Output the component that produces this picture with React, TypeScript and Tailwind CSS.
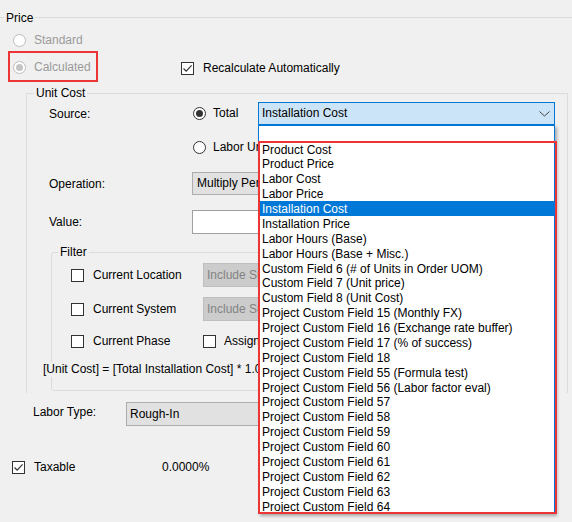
import React from 'react';

const sourceItems = [
  'Product Cost',
  'Product Price',
  'Labor Cost',
  'Labor Price',
  'Installation Cost',
  'Installation Price',
  'Labor Hours (Base)',
  'Labor Hours (Base + Misc.)',
  'Custom Field 6 (# of Units in Order UOM)',
  'Custom Field 7 (Unit price)',
  'Custom Field 8 (Unit Cost)',
  'Project Custom Field 15 (Monthly FX)',
  'Project Custom Field 16 (Exchange rate buffer)',
  'Project Custom Field 17 (% of success)',
  'Project Custom Field 18',
  'Project Custom Field 55 (Formula test)',
  'Project Custom Field 56 (Labor factor eval)',
  'Project Custom Field 57',
  'Project Custom Field 58',
  'Project Custom Field 59',
  'Project Custom Field 60',
  'Project Custom Field 61',
  'Project Custom Field 62',
  'Project Custom Field 63',
  'Project Custom Field 64',
];

function Radio({ checked, disabled }: { checked?: boolean; disabled?: boolean }) {
  return (
    <span
      className={`flex h-[13px] w-[13px] shrink-0 items-center justify-center rounded-full border bg-white ${
        disabled ? 'border-[#bcbcbc]' : 'border-[#333333]'
      }`}
    >
      {checked && (
        <span className={`h-[7px] w-[7px] rounded-full ${disabled ? 'bg-[#c4c4c4]' : 'bg-[#333333]'}`} />
      )}
    </span>
  );
}

function Check({ checked }: { checked?: boolean }) {
  return (
    <span className="flex h-[13px] w-[13px] shrink-0 items-center justify-center border border-[#333333] bg-white">
      {checked && (
        <svg width="11" height="11" viewBox="0 0 11 11">
          <path d="M1.5 5.5 L4.2 8.2 L9.6 2.4" fill="none" stroke="#333333" strokeWidth="1.2" />
        </svg>
      )}
    </span>
  );
}

export default function App() {
  return (
    <div className="relative h-[522px] w-[572px] overflow-hidden bg-[#f0f0f0] text-[12px] leading-[15px] text-black [font-family:'Liberation_Sans',Arial,sans-serif]">
      {/* Price group */}
      <fieldset className="mt-[10px] w-[590px] border-t border-[#dcdcdc]">
        <legend className="ml-[4px] px-[2px] leading-[15px]">
          <span className="relative top-[1px]">Price</span>
        </legend>
        <div className="pt-[5px]">
          <div className="flex h-[20px] items-center pl-[13px]">
            <Radio disabled />
            <span className="ml-[8px] text-[#9a9a9a]">Standard</span>
          </div>

          <div className="mt-[1px] flex h-[31px] items-center">
            <div className="ml-[8px] flex h-[31px] w-[90px] items-center border-2 border-[#ee3535] pl-[3px] pt-[2px]">
              <Radio checked disabled />
              <span className="ml-[8px] text-[#9a9a9a]">Calculated</span>
            </div>
            <div className="ml-[83px] mt-[3px] flex items-center">
              <Check checked />
              <span className="ml-[9px]">Recalculate Automatically</span>
            </div>
          </div>

          {/* Unit Cost group */}
          <fieldset className="ml-[26px] mt-[4px] w-[542px] border-x border-t border-[#dcdcdc]">
            <legend className="ml-[7px] px-[2px] leading-[15px]">Unit Cost</legend>
            <div className="pb-[2px] pl-[22px]">
              <div className="mt-[1px] flex h-[23px] items-center">
                <span className="w-[144px] pt-[1px]">Source:</span>
                <div className="flex w-[65px] items-center">
                  <Radio checked />
                  <span className="ml-[7px]">Total</span>
                </div>
                <div className="flex h-[23px] w-[297px] items-center justify-between border border-[#0078d7] bg-[#cce4f7] pl-[3px] pr-[4px]">
                  <span>Installation Cost</span>
                  <svg width="11" height="6" viewBox="0 0 11 6">
                    <path d="M0.5 0.5 L5.5 5 L10.5 0.5" fill="none" stroke="#444444" strokeWidth="1" />
                  </svg>
                </div>
              </div>

              <div className="mt-[11px] flex h-[23px] items-center pl-[144px]">
                <Radio />
                <span className="ml-[7px]">Labor Units</span>
              </div>

              <div className="mt-[13px] flex h-[23px] items-center">
                <span className="w-[143px] pt-[1px]">Operation:</span>
                <div className="flex h-[23px] w-[362px] items-center border border-[#adadad] bg-[#e1e1e1] pl-[4px]">
                  Multiply Percentage
                </div>
              </div>

              <div className="mt-[15px] flex h-[24px] items-center">
                <span className="w-[143px]">Value:</span>
                <div className="h-[24px] w-[362px] border border-[#a0a0a0] bg-white" />
              </div>

              {/* Filter group */}
              <fieldset className="ml-[2px] mt-[11px] w-[500px] rounded-[3px] border border-[#dcdcdc]">
                <legend className="ml-[6px] px-[2px] leading-[15px]">Filter</legend>
                <div className="pb-[13px] pl-[19px] pt-[3px]">
                  <div className="flex h-[24px] items-center">
                    <div className="flex w-[132px] items-center">
                      <Check />
                      <span className="ml-[9px]">Current Location</span>
                    </div>
                    <div className="flex h-[24px] w-[300px] items-center border border-[#bfbfbf] bg-[#cccccc] pl-[3px] text-[#838383]">
                      Include Sub-Locations
                    </div>
                  </div>
                  <div className="mt-[10px] flex h-[24px] items-center">
                    <div className="flex w-[132px] items-center">
                      <Check />
                      <span className="ml-[9px]">Current System</span>
                    </div>
                    <div className="flex h-[24px] w-[300px] items-center border border-[#bfbfbf] bg-[#cccccc] pl-[3px] text-[#838383]">
                      Include Sub-Systems
                    </div>
                  </div>
                  <div className="mt-[8px] flex h-[24px] items-center">
                    <div className="flex w-[132px] items-center">
                      <Check />
                      <span className="ml-[9px]">Current Phase</span>
                    </div>
                    <Check />
                    <span className="ml-[8px]">Assigned Items Only</span>
                  </div>
                  <div className="-ml-[28px] mt-[9px] h-[15px] w-fit whitespace-nowrap bg-[#f0f0f0] pr-[2px]">
                    [Unit Cost] = [Total Installation Cost] * 1.0000
                  </div>
                </div>
              </fieldset>
            </div>
          </fieldset>

          <div className="mt-[9px] flex h-[24px] items-center pl-[33px]">
            <span className="-mt-[3px] w-[93px]">Labor Type:</span>
            <div className="flex h-[24px] w-[250px] items-center border border-[#adadad] bg-[#e1e1e1] pl-[3px]">
              Rough-In
            </div>
          </div>

          <div className="mt-[31px] flex h-[20px] items-center pl-[12px]">
            <Check checked />
            <span className="ml-[9px] w-[128px] pt-[1px]">Taxable</span>
            <span className="pt-[1px]">0.0000%</span>
          </div>
        </div>
      </fieldset>

      {/* Open drop-down list of the Source combo */}
      <div className="absolute left-[258px] top-[125px] w-[297px] border border-[#0078d7] bg-white shadow-[2px_2px_3px_rgba(0,0,0,0.3)]">
        <div className="h-[15.5px]" />
        {sourceItems.map((item, i) => (
          <div
            key={item}
            className={`h-[14.875px] whitespace-nowrap pl-[3px] pt-[1px] leading-[14.875px] ${
              i === 4 ? 'bg-[#0078d7] text-white' : ''
            }`}
          >
            {item}
          </div>
        ))}
      </div>

      {/* Annotation highlight */}
      <div className="pointer-events-none absolute left-[258px] top-[141px] h-[373px] w-[299px] border-2 border-[#ee3535]" />
    </div>
  );
}
